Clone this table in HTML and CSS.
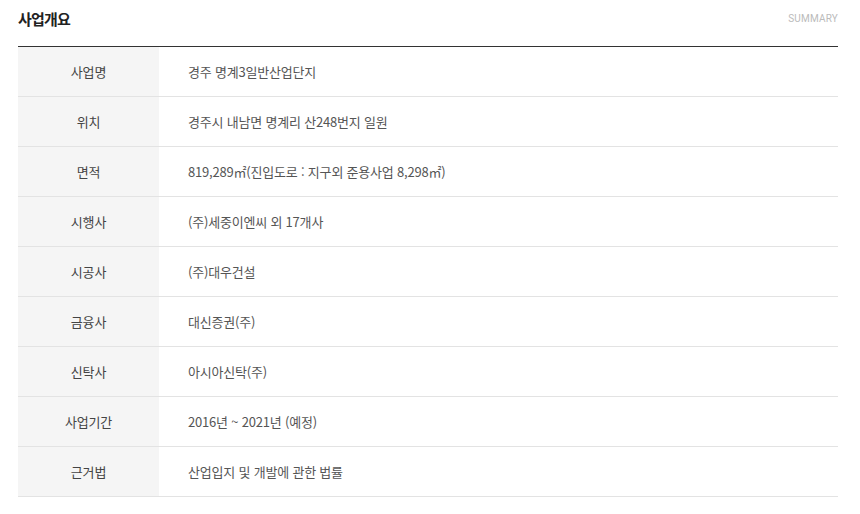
FILE: index.html
```html
<!DOCTYPE html>
<html lang="ko">
<head>
<meta charset="utf-8">
<link rel="stylesheet" href="styles.css">
</head>
<body>
<div class="wrap">
  <div class="head">
    <h2 class="title">사업개요</h2>
    <span class="sub">SUMMARY</span>
  </div>
  <table class="tbl">
    <tr><th>사업명</th><td>경주 명계3일반산업단지</td></tr>
    <tr><th>위치</th><td>경주시 내남면 명계리 산248번지 일원</td></tr>
    <tr><th>면적</th><td>819,289㎡(진입도로 : 지구외 준용사업 8,298㎡)</td></tr>
    <tr><th>시행사</th><td>(주)세중이엔씨 외 17개사</td></tr>
    <tr><th>시공사</th><td>(주)대우건설</td></tr>
    <tr><th>금융사</th><td>대신증권(주)</td></tr>
    <tr><th>신탁사</th><td>아시아신탁(주)</td></tr>
    <tr><th>사업기간</th><td>2016년 ~ 2021년 (예정)</td></tr>
    <tr><th>근거법</th><td>산업입지 및 개발에 관한 법률</td></tr>
  </table>
</div>
</body>
</html>
```
FILE: styles.css
```css
html, body { margin: 0; padding: 0; background: #fff; }
body { font-family: "Noto Sans CJK KR", "Noto Sans", sans-serif; color: #555; }
.wrap { padding: 0 22px 0 18px; }
.head { display: flex; justify-content: space-between; align-items: center; height: 46px; border-bottom: 1px solid #333; }
.title { margin: 0; font-size: 15px; font-weight: 700; color: #222; letter-spacing: -0.8px; position: relative; top: -5px; }
.sub { font-family: Roboto, "Liberation Sans", sans-serif; font-size: 10px; color: #bbb; letter-spacing: 0.2px; position: relative; top: -5px; }
.tbl { width: 100%; border-collapse: collapse; font-size: 13px; letter-spacing: -0.2px; }
.tbl th, .tbl td { height: 49px; border-bottom: 1px solid #e3e3e3; padding: 0; font-weight: 400; }
.tbl th { width: 141px; background: #f5f5f5; text-align: center; color: #444; }
.tbl td { padding-left: 29px; text-align: left; color: #555; }
```
